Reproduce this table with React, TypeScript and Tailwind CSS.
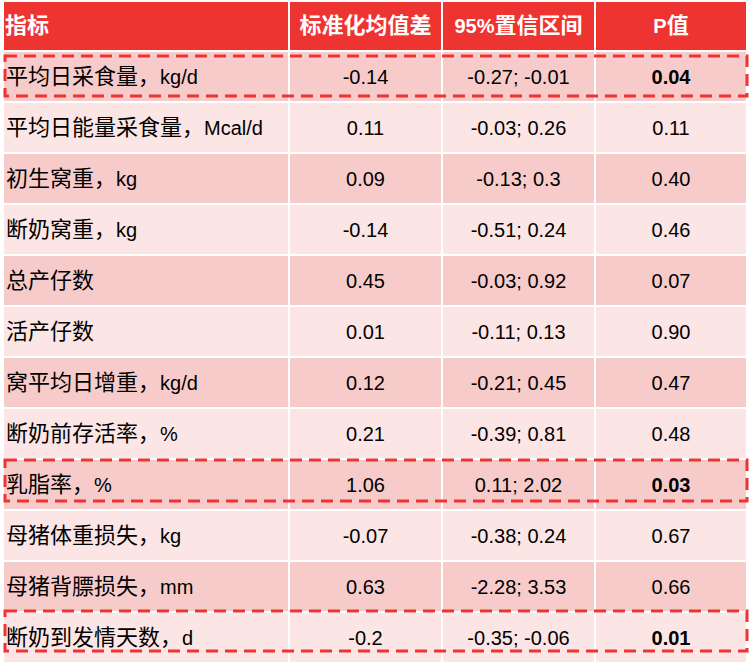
import React from "react";

type Row = {
  name: string;
  smd: string;
  ci: string;
  p: string;
  box?: string;
};

const rows: Row[] = [
  { name: "平均日采食量，kg/d", smd: "-0.14", ci: "-0.27; -0.01", p: "0.04", box: "top-[4px] h-[40px]" },
  { name: "平均日能量采食量，Mcal/d", smd: "0.11", ci: "-0.03; 0.26", p: "0.11" },
  { name: "初生窝重，kg", smd: "0.09", ci: "-0.13; 0.3", p: "0.40" },
  { name: "断奶窝重，kg", smd: "-0.14", ci: "-0.51; 0.24", p: "0.46" },
  { name: "总产仔数", smd: "0.45", ci: "-0.03; 0.92", p: "0.07" },
  { name: "活产仔数", smd: "0.01", ci: "-0.11; 0.13", p: "0.90" },
  { name: "窝平均日增重，kg/d", smd: "0.12", ci: "-0.21; 0.45", p: "0.47" },
  { name: "断奶前存活率，%", smd: "0.21", ci: "-0.39; 0.81", p: "0.48" },
  { name: "乳脂率，%", smd: "1.06", ci: "0.11; 2.02", p: "0.03", box: "top-[0px] h-[41px]" },
  { name: "母猪体重损失，kg", smd: "-0.07", ci: "-0.38; 0.24", p: "0.67" },
  { name: "母猪背膘损失，mm", smd: "0.63", ci: "-2.28; 3.53", p: "0.66" },
  { name: "断奶到发情天数，d", smd: "-0.2", ci: "-0.35; -0.06", p: "0.01", box: "top-[-2px] h-[40px]" },
];

const cols = "grid grid-cols-[284px_151px_151px_150px] gap-x-[2px]";

// CJK runs get a slightly larger size, like the original slide font pairing
function Mixed({ text }: { text: string }) {
  const parts = text.split(/([\u3000-\u303f\u4e00-\u9fff\uff00-\uffef]+)/).filter(Boolean);
  return (
    <>
      {parts.map((part, i) =>
        /[\u3000-\u303f\u4e00-\u9fff\uff00-\uffef]/.test(part) ? (
          <span key={i} className="text-[22px]">
            {part}
          </span>
        ) : (
          <span key={i}>{part}</span>
        )
      )}
    </>
  );
}

export default function App() {
  return (
    <div
      className="w-[754px] h-[662px] overflow-hidden bg-white pt-[2px] pl-[4px] text-[20px] leading-none text-black"
      style={{ fontFamily: '"Liberation Sans", "Noto Sans CJK SC", sans-serif' }}
    >
      <div className="flex w-[742px] flex-col gap-y-[2px]">
        {/* Header */}
        <div className={`${cols} h-[48px] font-bold text-white`}>
          <div className="flex items-center bg-[#ee3431] pl-[1px]">
            <Mixed text="指标" />
          </div>
          <div className="flex items-center justify-center bg-[#ee3431]">
            <Mixed text="标准化均值差" />
          </div>
          <div className="flex items-center justify-center bg-[#ee3431]">
            <Mixed text="95%置信区间" />
          </div>
          <div className="flex items-center justify-center bg-[#ee3431]">
            <Mixed text="P值" />
          </div>
        </div>

        {rows.map((row, i) => {
          const bg = i % 2 === 0 ? "bg-[#f8cbcb]" : "bg-[#fce5e5]";
          return (
            <div key={row.name} className={`${cols} relative h-[49px]`}>
              <div className={`flex items-center pl-[2px] ${bg}`}>
                <Mixed text={row.name} />
              </div>
              <div className={`flex items-center justify-center ${bg}`}>{row.smd}</div>
              <div className={`flex items-center justify-center ${bg}`}>{row.ci}</div>
              <div className={`flex items-center justify-center ${bg} ${row.box ? "font-bold" : ""}`}>
                {row.p}
              </div>
              {row.box && (
                <svg
                  className={`pointer-events-none absolute left-[1px] w-[742px] overflow-visible ${row.box}`}
                >
                  <rect
                    x="0"
                    y="0"
                    width="100%"
                    height="100%"
                    fill="none"
                    stroke="#ef3333"
                    strokeWidth="3"
                    strokeDasharray="12 7"
                  />
                </svg>
              )}
            </div>
          );
        })}
      </div>
    </div>
  );
}
